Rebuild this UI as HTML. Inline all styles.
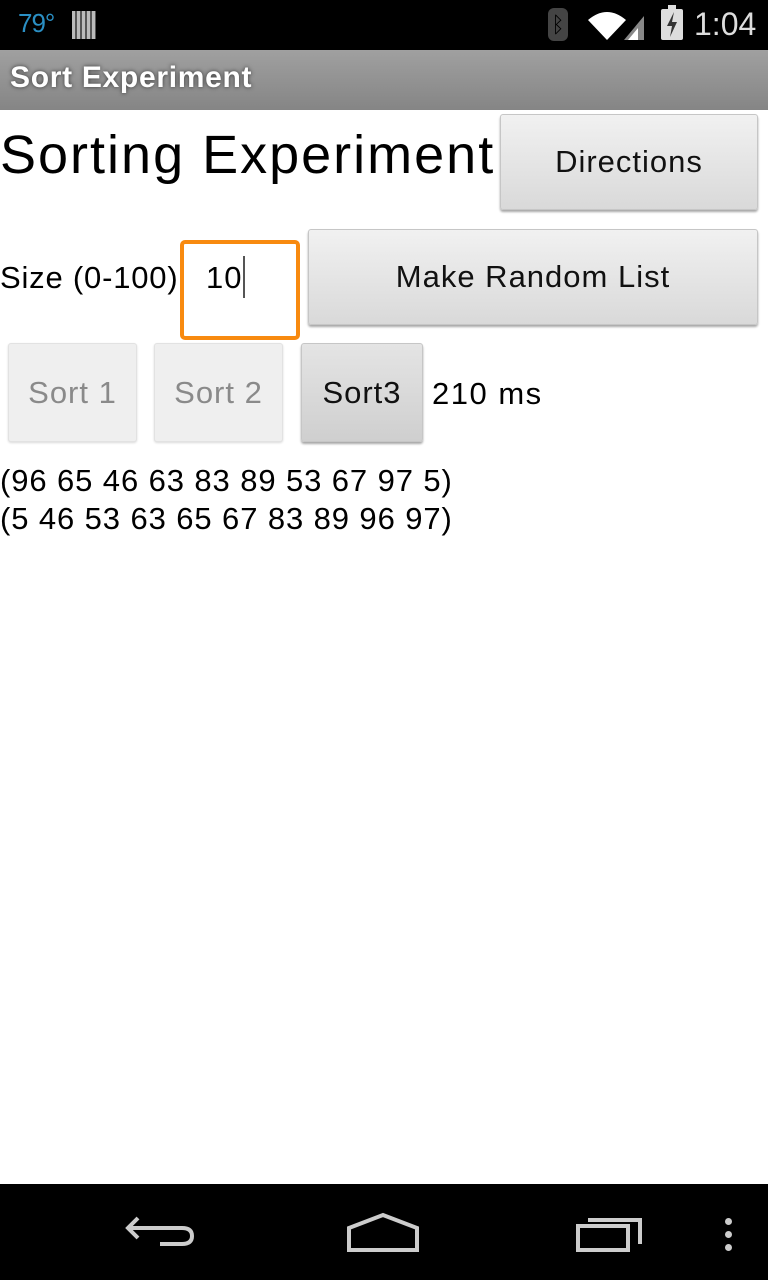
<!DOCTYPE html>
<html><head><meta charset="utf-8"><style>
*{margin:0;padding:0;box-sizing:border-box}
body{width:768px;height:1280px;background:#fff;font-family:"Liberation Sans",sans-serif;position:relative;overflow:hidden;color:#000}
.abs{position:absolute}
.btn{position:absolute;border-radius:3px;background:linear-gradient(#f1f1f1,#d9d9d9);border:1px solid #c6c6c6;box-shadow:0 2px 2px rgba(0,0,0,.35);display:flex;align-items:center;justify-content:center;font-size:31px;color:#111;letter-spacing:1px}
.dis{background:#efefef;border:1px solid #e2e2e2;box-shadow:0 1px 2px rgba(0,0,0,.15);color:#8a8a8a}
</style></head><body>
<div class="abs" style="left:0;top:0;width:768px;height:50px;background:#000"></div>
<div class="abs" style="left:18px;top:8px;font-size:26px;color:#2a8fc4;letter-spacing:-1px">79°</div>
<div class="abs" style="left:72px;top:11px;width:24px;height:28px;background:repeating-linear-gradient(90deg,#bbb 0 3px,#555 3px 5px)"></div>
<div class="abs" style="left:548px;top:8px;width:20px;height:33px;background:#444;border-radius:6px;color:#000;font-size:22px;text-align:center;line-height:33px">ᛒ</div>
<svg class="abs" style="left:586px;top:8px" width="70" height="34"><path d="M2 12 Q21 -4 40 12 L21 32 Z" fill="#fff"/><path d="M38 32 L58 8 L58 32 Z" fill="#888"/><path d="M42 32 L52 20 L52 32 Z" fill="#fff"/></svg>
<div class="abs" style="left:661px;top:9px;width:22px;height:31px;background:#ddd;border-radius:2px"></div>
<div class="abs" style="left:668px;top:5px;width:8px;height:5px;background:#ddd"></div>
<svg class="abs" style="left:661px;top:9px" width="22" height="31"><path d="M13 3 L6 17 H11 L9 28 L16 13 H11 Z" fill="#333"/></svg>
<div class="abs" style="left:694px;top:6px;font-size:32px;color:#ddd">1:04</div>
<div class="abs" style="left:0;top:50px;width:768px;height:60px;background:linear-gradient(#a0a0a0,#858585)"></div>
<div class="abs" style="left:10px;top:61px;font-size:30px;font-weight:bold;color:#fff;text-shadow:0 0 4px #333;letter-spacing:0.7px">Sort Experiment</div>
<div class="abs" style="left:0;top:124px;font-size:54px;white-space:nowrap;width:494px;overflow:hidden;letter-spacing:2px">Sorting Experiment</div>
<div class="btn" style="left:500px;top:114px;width:258px;height:96px">Directions</div>
<div class="abs" style="left:0;top:260px;font-size:31px;letter-spacing:0.8px">Size (0-100)</div>
<div class="abs" style="left:180px;top:240px;width:120px;height:100px;border:4px solid #f88a10;border-radius:5px;background:#fff"></div>
<div class="abs" style="left:206px;top:260px;font-size:31px;letter-spacing:1px">10</div>
<div class="abs" style="left:243px;top:256px;width:2px;height:42px;background:#555"></div>
<div class="btn" style="left:308px;top:229px;width:450px;height:96px">Make Random List</div>
<div class="btn dis" style="left:8px;top:343px;width:129px;height:99px">Sort 1</div>
<div class="btn dis" style="left:154px;top:343px;width:129px;height:99px">Sort 2</div>
<div class="btn" style="left:301px;top:343px;width:122px;height:99px;background:linear-gradient(#e4e4e4,#cfcfcf)">Sort3</div>
<div class="abs" style="left:432px;top:376px;font-size:31px;letter-spacing:1.5px">210 ms</div>
<div class="abs" style="left:0;top:462px;font-size:31px;line-height:38px;letter-spacing:0.9px">(96 65 46 63 83 89 53 67 97 5)<br>(5 46 53 63 65 67 83 89 96 97)</div>
<div class="abs" style="left:0;top:1184px;width:768px;height:96px;background:#000"></div>
<svg class="abs" style="left:120px;top:1210px" width="80" height="50"><path d="M18 8 L8 18 L18 28 M8 18 H62 Q72 18 72 26 Q72 34 62 34 H40" fill="none" stroke="#ccc" stroke-width="4"/></svg>
<svg class="abs" style="left:345px;top:1212px" width="80" height="42"><path d="M4 16 L38 3 L72 16 V38 H4 Z" fill="none" stroke="#ccc" stroke-width="4"/></svg>
<svg class="abs" style="left:574px;top:1214px" width="72" height="42"><path d="M4 12 H54 V36 H4 Z M14 6 H66 V30" fill="none" stroke="#ccc" stroke-width="4"/></svg>
<div class="abs" style="left:725px;top:1218px;width:7px;height:7px;background:#ccc;border-radius:50%;box-shadow:0 13px 0 #ccc,0 26px 0 #ccc"></div>
</body></html>
